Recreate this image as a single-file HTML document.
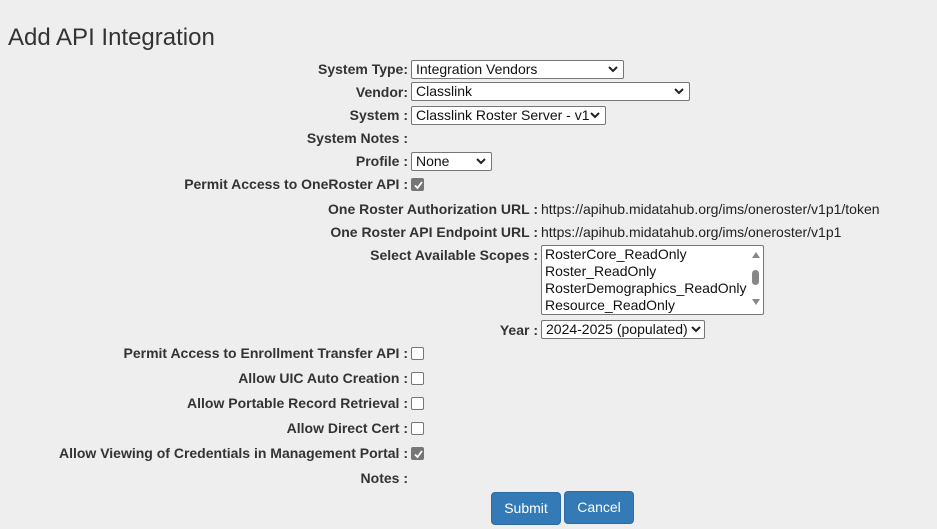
<!DOCTYPE html>
<html><head><style>
body{margin:0;background:#eee;font-family:"Liberation Sans",Arial,sans-serif;width:937px;height:529px;position:relative;overflow:hidden;color:#333}
h1{position:absolute;left:8px;top:24px;margin:0;font-size:24px;font-weight:normal;color:#333}
.l{position:absolute;font-weight:bold;font-size:14px;white-space:nowrap;text-align:right;line-height:16px}
.v{position:absolute;font-size:14px;white-space:nowrap;line-height:16px;color:#222}
.s{position:absolute;box-sizing:border-box;border:1px solid #767676;border-radius:2px;background:#fff;font-size:14px;line-height:16px;padding-left:4px;color:#111;white-space:nowrap}
.s svg{position:absolute;right:5px;top:5px}
.c{position:absolute;width:13px;height:13px;box-sizing:border-box;border:1px solid #767676;border-radius:2px;background:#fff}
.c.k{background:#767676;border-color:#767676}
.c.k svg{position:absolute;left:1px;top:1px}
.b{position:absolute;background:#337ab7;border:1px solid #2e6da4;border-radius:4px;color:#fff;font-size:14px;text-align:center;box-sizing:border-box}
</style></head><body>
<h1>Add API Integration</h1>
<div class="l" style="right:529px;top:61px">System Type:</div>
<div class="s" style="left:411px;top:60px;width:213px;height:19px">Integration Vendors<svg width="10" height="7"><path d="M1 1l4 4 4-4" stroke="#222" stroke-width="2" fill="none"/></svg></div>
<div class="l" style="right:529px;top:84px">Vendor:</div>
<div class="s" style="left:411px;top:82px;width:279px;height:19px">Classlink<svg width="10" height="7"><path d="M1 1l4 4 4-4" stroke="#222" stroke-width="2" fill="none"/></svg></div>
<div class="l" style="right:529px;top:107px">System :</div>
<div class="s" style="left:411px;top:106px;width:195px;height:19px">Classlink Roster Server - v1<svg width="10" height="7"><path d="M1 1l4 4 4-4" stroke="#222" stroke-width="2" fill="none"/></svg></div>
<div class="l" style="right:529px;top:130px">System Notes :</div>
<div class="l" style="right:529px;top:153px">Profile :</div>
<div class="s" style="left:411px;top:152px;width:81px;height:19px">None<svg width="10" height="7"><path d="M1 1l4 4 4-4" stroke="#222" stroke-width="2" fill="none"/></svg></div>
<div class="l" style="right:529px;top:176px">Permit Access to OneRoster API :</div>
<div class="c k" style="left:411px;top:178px"><svg width="11" height="11"><path d="M2 5.5l2.5 2.5 4.5-6" stroke="#fff" stroke-width="1.8" fill="none"/></svg></div>
<div class="l" style="right:399px;top:201px">One Roster Authorization URL :</div>
<div class="v" style="left:541px;top:201px">https://apihub.midatahub.org/ims/oneroster/v1p1/token</div>
<div class="l" style="right:399px;top:224px">One Roster API Endpoint URL :</div>
<div class="v" style="left:541px;top:224px">https://apihub.midatahub.org/ims/oneroster/v1p1</div>
<div class="l" style="right:399px;top:247px">Select Available Scopes :</div>
<div class="s" style="left:541px;top:245px;width:223px;height:70px;padding-left:3px;line-height:17px">RosterCore_ReadOnly<br>Roster_ReadOnly<br>RosterDemographics_ReadOnly<br>Resource_ReadOnly
<div style="position:absolute;right:3px;top:6px;width:0;height:0;border:4px solid transparent;border-bottom:6px solid #888;border-top:0"></div>
<div style="position:absolute;right:4px;top:24px;width:7px;height:15px;border-radius:4px;background:#888"></div>
<div style="position:absolute;right:3px;top:53px;width:0;height:0;border:4px solid transparent;border-top:6px solid #888;border-bottom:0"></div></div>
<div class="l" style="right:399px;top:322px">Year :</div>
<div class="s" style="left:541px;top:320px;width:164px;height:19px">2024-2025 (populated)<svg width="10" height="7" style="right:3px"><path d="M1 1l4 4 4-4" stroke="#222" stroke-width="2" fill="none"/></svg></div>
<div class="l" style="right:529px;top:345px">Permit Access to Enrollment Transfer API :</div>
<div class="c" style="left:411px;top:347px"></div>
<div class="l" style="right:529px;top:370px">Allow UIC Auto Creation :</div>
<div class="c" style="left:411px;top:372px"></div>
<div class="l" style="right:529px;top:395px">Allow Portable Record Retrieval :</div>
<div class="c" style="left:411px;top:397px"></div>
<div class="l" style="right:529px;top:420px">Allow Direct Cert :</div>
<div class="c" style="left:411px;top:422px"></div>
<div class="l" style="right:529px;top:445px">Allow Viewing of Credentials in Management Portal :</div>
<div class="c k" style="left:411px;top:447px"><svg width="11" height="11"><path d="M2 5.5l2.5 2.5 4.5-6" stroke="#fff" stroke-width="1.8" fill="none"/></svg></div>
<div class="l" style="right:529px;top:470px">Notes :</div>
<div class="b" style="left:491px;top:492px;width:70px;height:33px;line-height:31px">Submit</div>
<div class="b" style="left:564px;top:491px;width:70px;height:33px;line-height:31px">Cancel</div>
</body></html>
